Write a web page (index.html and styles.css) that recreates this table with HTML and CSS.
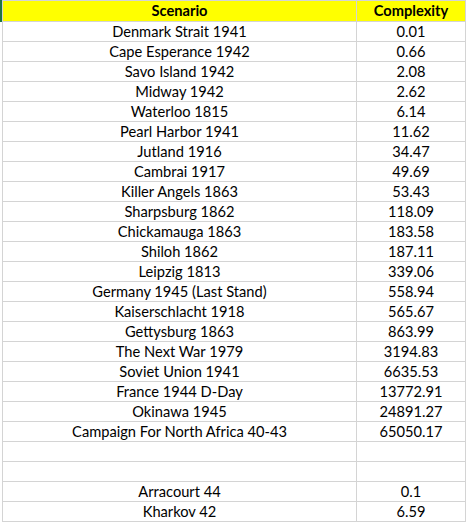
FILE: index.html
```html
<!DOCTYPE html>
<html lang="en">
<head>
  <meta charset="UTF-8" />
  <title>Scenario Complexity</title>
  <link rel="stylesheet" href="styles.css">
</head>
<body>
  <table class="sheet">
    <thead>
      <tr>
        <th class="name">Scenario</th>
        <th class="value">Complexity</th>
      </tr>
    </thead>
    <tbody>
      <tr><td class="name">Denmark Strait 1941</td><td class="value">0.01</td></tr>
      <tr><td class="name">Cape Esperance 1942</td><td class="value">0.66</td></tr>
      <tr><td class="name">Savo Island 1942</td><td class="value">2.08</td></tr>
      <tr><td class="name">Midway 1942</td><td class="value">2.62</td></tr>
      <tr><td class="name">Waterloo 1815</td><td class="value">6.14</td></tr>
      <tr><td class="name">Pearl Harbor 1941</td><td class="value">11.62</td></tr>
      <tr><td class="name">Jutland 1916</td><td class="value">34.47</td></tr>
      <tr><td class="name">Cambrai 1917</td><td class="value">49.69</td></tr>
      <tr><td class="name">Killer Angels 1863</td><td class="value">53.43</td></tr>
      <tr><td class="name">Sharpsburg 1862</td><td class="value">118.09</td></tr>
      <tr><td class="name">Chickamauga 1863</td><td class="value">183.58</td></tr>
      <tr><td class="name">Shiloh 1862</td><td class="value">187.11</td></tr>
      <tr><td class="name">Leipzig 1813</td><td class="value">339.06</td></tr>
      <tr><td class="name">Germany 1945 (Last Stand)</td><td class="value">558.94</td></tr>
      <tr><td class="name">Kaiserschlacht 1918</td><td class="value">565.67</td></tr>
      <tr><td class="name">Gettysburg 1863</td><td class="value">863.99</td></tr>
      <tr><td class="name">The Next War 1979</td><td class="value">3194.83</td></tr>
      <tr><td class="name">Soviet Union 1941</td><td class="value">6635.53</td></tr>
      <tr><td class="name">France 1944 D-Day</td><td class="value">13772.91</td></tr>
      <tr><td class="name">Okinawa 1945</td><td class="value">24891.27</td></tr>
      <tr><td class="name">Campaign For North Africa 40-43</td><td class="value">65050.17</td></tr>
      <tr><td class="name"></td><td class="value"></td></tr>
      <tr><td class="name"></td><td class="value"></td></tr>
      <tr><td class="name">Arracourt 44</td><td class="value">0.1</td></tr>
      <tr><td class="name">Kharkov 42</td><td class="value">6.59</td></tr>
    </tbody>
  </table>
</body>
</html>
```

FILE: styles.css
```css
body {
    margin: 0;
    padding-left: 2px;
    background: #fff;
    font-family: Lato, "Open Sans", sans-serif;
    font-size: 14.67px;
    color: #000;
}

.sheet {
    border-collapse: separate;
    border-spacing: 0;
    table-layout: fixed;
}

.sheet th,
.sheet td {
    padding: 0;
    text-align: center;
    white-space: nowrap;
    border-right: 1px solid #d4d4d4;
    border-bottom: 1px solid #d4d4d4;
    height: 19px;
    line-height: 19px;
}

.sheet th {
    background: #ffff00;
    font-weight: bold;
    height: 20px;
    line-height: 20px;
    border-top: 1px solid #d4d4d4;
}

.sheet th.name {
    box-shadow: -2px 0 0 #217346;
}

.sheet .name {
    width: 353px;
    border-left: 1px solid #d4d4d4;
}

.sheet .value {
    width: 108px;
}
```
